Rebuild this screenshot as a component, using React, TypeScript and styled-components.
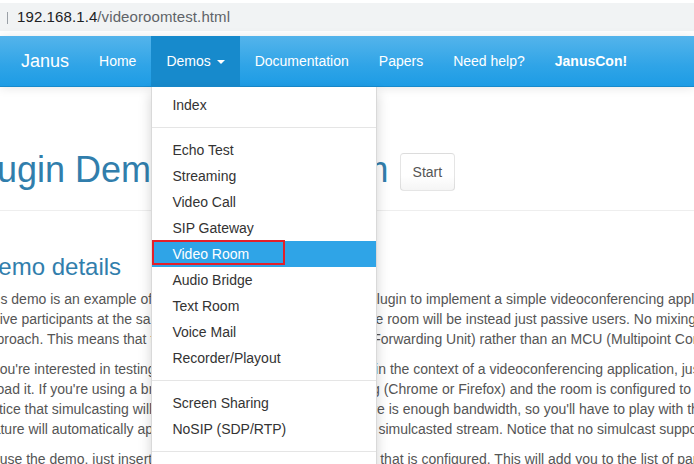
import React from "react";
import styled, { createGlobalStyle } from "styled-components";

const GlobalStyle = createGlobalStyle`
  html, body {
    margin: 0;
    padding: 0;
    background: #fff;
    overflow: hidden;
  }
  body {
    font-family: "Liberation Sans", Arial, Helvetica, sans-serif;
    font-size: 14px;
    line-height: 20px;
    color: #555;
  }
  * { box-sizing: border-box; }
`;

const Frame = styled.div`
  width: 694px;
  height: 464px;
  overflow: hidden;
  position: relative;
  background: #fff;
`;

const Chrome = styled.div`
  height: 36px;
  padding-top: 3px;
  padding-bottom: 5px;
  background: #fff;
`;

const Omnibox = styled.div`
  height: 28px;
  background: #f1f3f4;
  display: flex;
  align-items: center;
  padding-left: 7px;
`;

const CaretBar = styled.span`
  width: 1px;
  height: 12px;
  background: #9aa0a6;
  margin-right: 9px;
  margin-top: 1px;
`;

const Url = styled.span`
  font-family: "Liberation Sans", Arial, sans-serif;
  font-size: 15px;
  letter-spacing: 0.1px;
  color: #5f6368;
  white-space: nowrap;
`;

const Host = styled.span`
  color: #202124;
`;

const Navbar = styled.nav`
  position: relative;
  z-index: 10;
  height: 51px;
  display: flex;
  align-items: stretch;
  background-image: linear-gradient(#54b4eb, #2fa4e7 60%, #1d9ce5);
  border-bottom: 1px solid #178acc;
  box-shadow: 0 1px 10px rgba(0, 0, 0, 0.1);
`;

const Brand = styled.a`
  margin-left: 6px;
  padding: 0 15px;
  font-size: 18px;
  line-height: 50px;
  height: 50px;
  color: #fff;
  text-decoration: none;
`;

const NavList = styled.ul`
  list-style: none;
  margin: 0;
  padding: 0;
  display: flex;
  height: 50px;
`;

const NavItem = styled.li`
  position: relative;
  height: 50px;
`;

const NavLink = styled.a<{ $active?: boolean; $bold?: boolean }>`
  display: block;
  padding: 0 15px;
  height: 50px;
  line-height: 50px;
  color: #fff;
  text-decoration: none;
  white-space: nowrap;
  font-weight: ${(p) => (p.$bold ? 700 : 400)};
  background: ${(p) => (p.$active ? "#178acc" : "transparent")};
`;

const Caret = styled.span`
  display: inline-block;
  width: 0;
  height: 0;
  margin-left: 2px;
  vertical-align: middle;
  border-top: 4px solid #fff;
  border-left: 4px solid transparent;
  border-right: 4px solid transparent;
`;

const Menu = styled.ul`
  position: absolute;
  top: calc(100% + 1px);
  left: 0;
  width: 226px;
  margin: 0;
  padding: 5px 0;
  list-style: none;
  background: #fff;
  border: 1px solid rgba(0, 0, 0, 0.15);
  border-top: 0;
  box-shadow: 0 6px 12px rgba(0, 0, 0, 0.175);
`;

const MenuItem = styled.li<{ $active?: boolean }>`
  position: relative;
  padding: 3px 20px;
  line-height: 20px;
  white-space: nowrap;
  color: ${(p) => (p.$active ? "#fff" : "#333")};
  background: ${(p) => (p.$active ? "#2fa4e7" : "transparent")};
`;

const Divider = styled.li`
  height: 1px;
  margin: 9px 0;
  background: #e5e5e5;
`;

const Annotation = styled.span`
  position: absolute;
  left: 0;
  top: -1px;
  width: 133px;
  height: 25px;
  border: 2px solid #e3202a;
`;

const Main = styled.main`
  margin-left: -35px;
  padding-top: 61px;
`;

const PageHeader = styled.div`
  padding-bottom: 19px;
  border-bottom: 1px solid #eee;
`;

const H1 = styled.h1`
  margin: 0;
  display: flex;
  align-items: center;
  font-size: 36px;
  line-height: 40px;
  font-weight: 400;
  color: #317eac;
  white-space: nowrap;
`;

const StartButton = styled.button`
  margin-left: 11px;
  margin-top: 5px;
  padding: 8px 12px;
  font-family: inherit;
  font-size: 14px;
  line-height: 20px;
  color: #555;
  background-image: linear-gradient(#fff, #fff 60%, #f5f5f5);
  border: 1px solid rgba(0, 0, 0, 0.1);
  border-radius: 4px;
`;

const Details = styled.section`
  padding-left: 16px;
  padding-top: 43px;
`;

const H3 = styled.h3`
  margin: 0 0 9px;
  font-size: 24px;
  line-height: 26px;
  font-weight: 400;
  color: #317eac;
`;

const Para = styled.p`
  margin: 0 0 10px;
  color: #555;
`;

const Line = styled.span`
  display: block;
  white-space: nowrap;
`;

const paragraphs: string[][] = [
  [
    "This demo is an example of how you can use the Video Room plugin to implement a simple videoconferencing application. In particular, this demo page allows you to have up to 6",
    "active participants at the same time: more participants joining the room will be instead just passive users. No mixing is involved: all media are just relayed in a publisher/subscriber",
    "approach. This means that the plugin acts as a SFU (Selective Forwarding Unit) rather than an MCU (Multipoint Control Unit).",
  ],
  [
    "If you're interested in testing how simulcasting can be used within the context of a videoconferencing application, just pass the simulcast=true query string to the url of this page and",
    "reload it. If you're using a browser that may support simulcasting (Chrome or Firefox) and the room is configured to use VP8, you'll send three different quality streams instead of",
    "Notice that simulcasting will only be used by the publisher if there is enough bandwidth, so you'll have to play with the available settings. Simulcast",
    "feature will automatically apply to their different subscribers of a simulcasted stream. Notice that no simulcast support is needed for receiving.",
  ],
  [
    "To use the demo, just insert a username to join the default room that is configured. This will add you to the list of participants, and allow you to",
  ],
];

type Entry = { label: string; active?: boolean } | "divider";

const demos: Entry[] = [
  { label: "Index" },
  "divider",
  { label: "Echo Test" },
  { label: "Streaming" },
  { label: "Video Call" },
  { label: "SIP Gateway" },
  { label: "Video Room", active: true },
  { label: "Audio Bridge" },
  { label: "Text Room" },
  { label: "Voice Mail" },
  { label: "Recorder/Playout" },
  "divider",
  { label: "Screen Sharing" },
  { label: "NoSIP (SDP/RTP)" },
  "divider",
  { label: "Duktape Demo" },
];

export default function App() {
  return (
    <Frame>
      <GlobalStyle />
      <Chrome>
        <Omnibox>
          <CaretBar />
          <Url>
            <Host>192.168.1.4</Host>/videoroomtest.html
          </Url>
        </Omnibox>
      </Chrome>
      <Navbar>
        <Brand>Janus</Brand>
        <NavList>
          <NavItem>
            <NavLink>Home</NavLink>
          </NavItem>
          <NavItem>
            <NavLink $active>
              Demos <Caret />
            </NavLink>
            <Menu>
              {demos.map((d, i) =>
                d === "divider" ? (
                  <Divider key={i} />
                ) : (
                  <MenuItem key={i} $active={d.active}>
                    {d.label}
                    {d.active && <Annotation />}
                  </MenuItem>
                )
              )}
            </Menu>
          </NavItem>
          <NavItem>
            <NavLink>Documentation</NavLink>
          </NavItem>
          <NavItem>
            <NavLink>Papers</NavLink>
          </NavItem>
          <NavItem>
            <NavLink>Need help?</NavLink>
          </NavItem>
          <NavItem>
            <NavLink $bold>JanusCon!</NavLink>
          </NavItem>
        </NavList>
      </Navbar>
      <Main>
        <PageHeader>
          <H1>
            Plugin Demo: Video Room
            <StartButton>Start</StartButton>
          </H1>
        </PageHeader>
        <Details>
          <H3>Demo details</H3>
          {paragraphs.map((lines, i) => (
            <Para key={i}>
              {lines.map((l, j) => (
                <Line key={j}>{l}</Line>
              ))}
            </Para>
          ))}
        </Details>
      </Main>
    </Frame>
  );
}
